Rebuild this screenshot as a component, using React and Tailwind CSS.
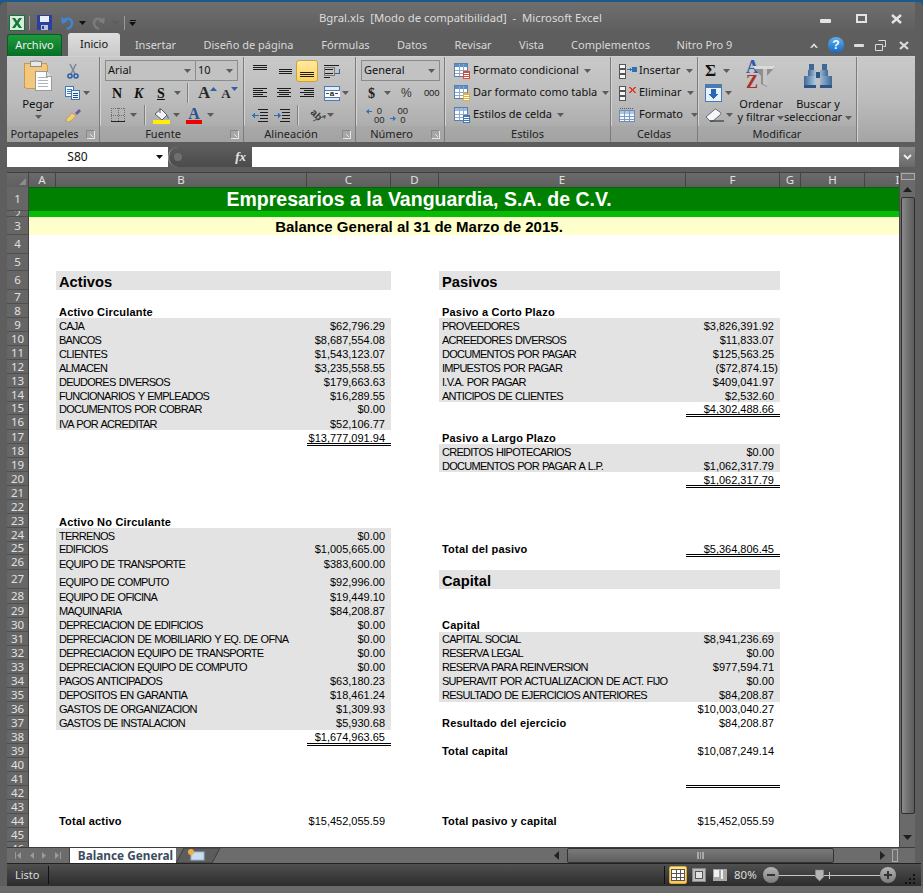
import React from 'react';

const UI = "font-['Noto_Sans',sans-serif]";
const ARIAL = "font-['Liberation_Sans',Arial,sans-serif]";
const SERIF = "font-['Liberation_Serif',serif]";

const HEIGHTS = {
  1: 'h-[24px]', 2: 'h-[6px]', 3: 'h-[18px]', 4: 'h-[19px]', 5: 'h-[17px]', 6: 'h-[19px]',
  15: 'h-[13px]', 16: 'h-[15px]', 26: 'h-[15px]', 25: 'h-[13px]', 27: 'h-[19px]', 28: 'h-[15px]',
};

const ROWS = {
  6: { l: { t: 'Activos', k: 'head' }, r: { t: 'Pasivos', k: 'head' } },
  7: {},
  8: { l: { t: 'Activo Circulante', k: 'sub' }, r: { t: 'Pasivo a Corto Plazo', k: 'sub' } },
  9: { l: { t: 'CAJA', v: '$62,796.29', k: 'band' }, r: { t: 'PROVEEDORES', v: '$3,826,391.92', k: 'band' } },
  10: { l: { t: 'BANCOS', v: '$8,687,554.08', k: 'band' }, r: { t: 'ACREEDORES DIVERSOS', v: '$11,833.07', k: 'band' } },
  11: { l: { t: 'CLIENTES', v: '$1,543,123.07', k: 'band' }, r: { t: 'DOCUMENTOS POR PAGAR', v: '$125,563.25', k: 'band' } },
  12: { l: { t: 'ALMACEN', v: '$3,235,558.55', k: 'band' }, r: { t: 'IMPUESTOS POR PAGAR', v: '($72,874.15)', k: 'band', tight: true } },
  13: { l: { t: 'DEUDORES DIVERSOS', v: '$179,663.63', k: 'band' }, r: { t: 'I.V.A. POR PAGAR', v: '$409,041.97', k: 'band' } },
  14: { l: { t: 'FUNCIONARIOS Y EMPLEADOS', v: '$16,289.55', k: 'band' }, r: { t: 'ANTICIPOS DE CLIENTES', v: '$2,532.60', k: 'band' } },
  15: { l: { t: 'DOCUMENTOS POR COBRAR', v: '$0.00', k: 'band' }, r: { v: '$4,302,488.66', dbl: true } },
  16: { l: { t: 'IVA POR ACREDITAR', v: '$52,106.77', k: 'band' } },
  17: { l: { v: '$13,777,091.94', dbl: true }, r: { t: 'Pasivo a Largo Plazo', k: 'sub' } },
  18: { r: { t: 'CREDITOS HIPOTECARIOS', v: '$0.00', k: 'band' } },
  19: { r: { t: 'DOCUMENTOS POR PAGAR A L.P.', v: '$1,062,317.79', k: 'band' } },
  20: { r: { v: '$1,062,317.79', dbl: true } },
  23: { l: { t: 'Activo No Circulante', k: 'sub' } },
  24: { l: { t: 'TERRENOS', v: '$0.00', k: 'band' } },
  25: { l: { t: 'EDIFICIOS', v: '$1,005,665.00', k: 'band' }, r: { t: 'Total del pasivo', v: '$5,364,806.45', k: 'sub', dbl: true } },
  26: { l: { t: 'EQUIPO DE TRANSPORTE', v: '$383,600.00', k: 'band' } },
  27: { l: { t: 'EQUIPO DE COMPUTO', v: '$92,996.00', k: 'band' }, r: { t: 'Capital', k: 'head' } },
  28: { l: { t: 'EQUIPO DE OFICINA', v: '$19,449.10', k: 'band' } },
  29: { l: { t: 'MAQUINARIA', v: '$84,208.87', k: 'band' } },
  30: { l: { t: 'DEPRECIACION DE EDIFICIOS', v: '$0.00', k: 'band' }, r: { t: 'Capital', k: 'sub' } },
  31: { l: { t: 'DEPRECIACION DE MOBILIARIO Y EQ. DE OFNA', v: '$0.00', k: 'band' }, r: { t: 'CAPITAL SOCIAL', v: '$8,941,236.69', k: 'band' } },
  32: { l: { t: 'DEPRECIACION EQUIPO DE TRANSPORTE', v: '$0.00', k: 'band' }, r: { t: 'RESERVA LEGAL', v: '$0.00', k: 'band' } },
  33: { l: { t: 'DEPRECIACION EQUIPO DE COMPUTO', v: '$0.00', k: 'band' }, r: { t: 'RESERVA PARA REINVERSION', v: '$977,594.71', k: 'band' } },
  34: { l: { t: 'PAGOS ANTICIPADOS', v: '$63,180.23', k: 'band' }, r: { t: 'SUPERAVIT POR ACTUALIZACION DE ACT. FIJO', v: '$0.00', k: 'band' } },
  35: { l: { t: 'DEPOSITOS EN GARANTIA', v: '$18,461.24', k: 'band' }, r: { t: 'RESULTADO DE EJERCICIOS ANTERIORES', v: '$84,208.87', k: 'band' } },
  36: { l: { t: 'GASTOS DE ORGANIZACION', v: '$1,309.93', k: 'band' }, r: { v: '$10,003,040.27' } },
  37: { l: { t: 'GASTOS DE INSTALACION', v: '$5,930.68', k: 'band' }, r: { t: 'Resultado del ejercicio', v: '$84,208.87', k: 'sub' } },
  38: { l: { v: '$1,674,963.65', dbl: true } },
  39: { r: { t: 'Total capital', v: '$10,087,249.14', k: 'sub' } },
  41: { r: { dbl: true } },
  44: { l: { t: 'Total activo', v: '$15,452,055.59', k: 'sub' }, r: { t: 'Total pasivo y capital', v: '$15,452,055.59', k: 'sub' } },
};

const COLUMNS = [
  ['A', 'w-[27px]'], ['B', 'w-[251px]'], ['C', 'w-[84px]'], ['D', 'w-[48px]'], ['E', 'w-[247px]'],
  ['F', 'w-[94px]'], ['G', 'w-[21px]'], ['H', 'w-[64px]'], ['I', 'w-[66px]'],
];

function Drop({ className = '' }) {
  return (
    <svg width="7" height="4" viewBox="0 0 7 4" className={`shrink-0 ${className}`}>
      <path d="M0 0h7L3.5 4z" fill="#5c5c5c" />
    </svg>
  );
}

function Sep() {
  return <div className="w-[2px] h-[20px] bg-[#808080] border-r border-[#d4d4d4] shrink-0" />;
}

function Lines({ rows }) {
  return (
    <svg width="16" height="14" viewBox="0 0 16 14" shapeRendering="crispEdges" className="shrink-0">
      {rows.map(([a, b, y], i) => <rect key={i} x={a} y={y} width={b - a} height="1" fill="#1c1c1c" />)}
    </svg>
  );
}

function Launcher() {
  return (
    <div className="w-[17px] flex items-center justify-center">
      <svg width="9" height="9" viewBox="0 0 9 9" shapeRendering="crispEdges">
        <path d="M0 0h8v1H1v7H0z" fill="#8a8a8a" />
        <path d="M8 1h1v8H1V8h7zM4 4h1v1H4zM5 5h1v1H5zM6 6h1v1H6z" fill="#e6e6e6" />
      </svg>
    </div>
  );
}

function Group({ w, label, launcher, children }) {
  return (
    <div className={`${w} shrink-0 flex flex-col border-r border-[#7c7c7c] shadow-[1px_0_0_#d2d2d2]`}>
      <div className="h-[66px] mt-[3px] flex">{children}</div>
      <div className="h-[17px] flex items-center bg-gradient-to-b from-[#a9a9a9] to-[#a2a2a2]">
        <div className="flex-1 text-center text-[11px] leading-none text-[#222] pb-[2px]">{label}</div>
        {launcher && <Launcher />}
      </div>
    </div>
  );
}

function Row22({ children, className = '' }) {
  return <div className={`h-[22px] flex items-center whitespace-nowrap ${className}`}>{children}</div>;
}

function Combo({ w, label, className = '' }) {
  return (
    <div className={`${w} h-[21px] border border-[#8b8b8b] bg-[#c2c2c2] flex items-center justify-between pl-[2px] pr-[4px] text-[11px] text-[#111] ${className}`}>
      <span>{label}</span>
      <Drop />
    </div>
  );
}

function ExcelLogo() {
  return (
    <svg width="16" height="16" viewBox="0 0 16 16">
      <rect width="16" height="16" rx="1" fill="#0f7a35" />
      <rect x="1" y="1" width="14" height="14" fill="#d9ecd9" />
      <path d="M3 3h3l2 3 2-3h3L9.5 8 13 13h-3L8 10l-2 3H3l3.5-5z" fill="#0f7a35" />
    </svg>
  );
}

function SaveIcon() {
  return (
    <svg width="15" height="15" viewBox="0 0 15 15" shapeRendering="crispEdges">
      <rect width="15" height="15" fill="#2b3f9e" />
      <rect x="3" y="1" width="9" height="6" fill="#e8edf6" />
      <rect x="4" y="10" width="7" height="5" fill="#b9c3dc" />
      <rect x="5" y="11" width="2" height="3" fill="#2b3f9e" />
    </svg>
  );
}

function UndoIcon({ color, flip }) {
  return (
    <svg width="14" height="14" viewBox="0 0 14 14" className={flip ? '-scale-x-100' : ''}>
      <path d="M4 4c3-2.5 8-1.5 8 3 0 3-2 5-5 6" fill="none" stroke={color} strokeWidth="2.4" />
      <path d="M1 1l1 7 6-3z" fill={color} />
    </svg>
  );
}

function ClipboardIcon() {
  return (
    <svg width="28" height="31" viewBox="0 0 28 31" shapeRendering="crispEdges">
      <rect x="0" y="3" width="23" height="25" rx="2" fill="#f3c77c" stroke="#c99a4e" />
      <rect x="6" y="1" width="11" height="5" fill="#e9e9e9" stroke="#8d8d8d" />
      <rect x="9" y="0" width="5" height="2" fill="#a9a9a9" />
      <path d="M11 11h11l5 5v14H11z" fill="#fdfdfd" stroke="#9a9a9a" />
      <path d="M14 17h10M14 20h10M14 23h10M14 26h10" stroke="#a8b4c4" />
      <path d="M22 11v5h5" fill="#dcdcdc" stroke="#9a9a9a" />
    </svg>
  );
}

function ScissorsIcon() {
  return (
    <svg width="12" height="16" viewBox="0 0 12 16">
      <path d="M3 1l5 10M9 1L4 11" stroke="#7c8795" strokeWidth="1.6" />
      <circle cx="3" cy="13" r="2" fill="none" stroke="#2b5fa8" strokeWidth="1.6" />
      <circle cx="9" cy="13" r="2" fill="none" stroke="#2b5fa8" strokeWidth="1.6" />
    </svg>
  );
}

function CopyIcon() {
  return (
    <svg width="15" height="14" viewBox="0 0 15 14" shapeRendering="crispEdges">
      <rect x=".5" y=".5" width="8" height="10" fill="#f8fbff" stroke="#3f79b5" />
      <path d="M2 3h5M2 5h5M2 7h4" stroke="#3f79b5" />
      <rect x="6.5" y="4.5" width="8" height="9" fill="#eef5fd" stroke="#3f79b5" />
      <path d="M8 7h5M8 9h5M8 11h5" stroke="#274f85" />
    </svg>
  );
}

function BrushIcon() {
  return (
    <svg width="17" height="14" viewBox="0 0 17 14">
      <path d="M1 11c2-1 3-3 6-6l4 3c-3 3-5 5-7 6-2 0-3-1-3-3z" fill="#f1cf72" stroke="#a88a3a" strokeWidth=".6" />
      <path d="M10 5l4-4 2 2-4 4z" fill="#6a5a9c" />
    </svg>
  );
}

function BorderIcon() {
  return (
    <svg width="14" height="14" viewBox="0 0 14 14" shapeRendering="crispEdges">
      <path d="M0 .5h14M0 7h14M.5 0v13M7 0v13M13.5 0v13" stroke="#6f6f6f" strokeDasharray="1 1" fill="none" />
      <rect x="0" y="13" width="14" height="1" fill="#202020" />
    </svg>
  );
}

function BucketIcon() {
  return (
    <svg width="17" height="17" viewBox="0 0 17 17">
      <path d="M2 7l6-5 6 6-5 5z" fill="#f4f4f4" stroke="#55606e" />
      <path d="M7 1v5" stroke="#55606e" />
      <path d="M14 8c1.5 1 2 3 1.5 4-1-.5-1.5-2-1.5-4z" fill="#3e6fb0" />
      <rect x="0" y="13" width="17" height="4" fill="#ffee00" />
    </svg>
  );
}

function WrapIcon() {
  return (
    <svg width="16" height="14" viewBox="0 0 16 14" shapeRendering="crispEdges">
      <path d="M0 1h15M0 5h9M0 9h9M0 13h6" stroke="#1c1c1c" />
      <rect x="0" y="3" width="10" height="8" fill="none" stroke="#7a7a7a" />
      <path d="M15 5v4h-4" fill="none" stroke="#2d62a8" />
    </svg>
  );
}

function MergeIcon() {
  return (
    <svg width="16" height="15" viewBox="0 0 16 15" shapeRendering="crispEdges">
      <rect x=".5" y=".5" width="15" height="14" fill="#e4edf7" stroke="#5479a8" />
      <rect x="0" y="4" width="16" height="7" fill="#fff" stroke="#5479a8" />
      <path d="M2 7h3M11 7h3" stroke="#264f88" />
      <text x="8" y="10" fontSize="8" textAnchor="middle" fontFamily="Liberation Sans" fontWeight="700" fill="#222">a</text>
    </svg>
  );
}

function IndentIcon({ flip }) {
  return (
    <svg width="16" height="13" viewBox="0 0 16 13" shapeRendering="crispEdges">
      <path d="M6 .5h10M8 3.5h8M8 6.5h8M8 9.5h8M6 12.5h10" stroke="#1c1c1c" />
      <path d={flip ? 'M0 6h4V4l3 2.5L4 9V7H0z' : 'M7 6H3V4L0 6.5 3 9V7h4z'} fill="#2d6fb8" />
    </svg>
  );
}

function OrientIcon() {
  return (
    <svg width="18" height="17" viewBox="0 0 18 17">
      <text x="1" y="6" fontSize="10" fontWeight="700" fontFamily="Liberation Sans" fill="#333" transform="rotate(45 1 6)">ab</text>
      <path d="M4 14L16 9" stroke="#555" />
      <path d="M17 8l-1 4-3-3z" fill="#555" />
    </svg>
  );
}

function ArrowRight() {
  return <svg width="6" height="5" viewBox="0 0 6 5"><path d="M0 2h3V0l3 2.5L3 5V3H0z" fill="#2d6fb8" /></svg>;
}

function ArrowLeft() {
  return <svg width="6" height="5" viewBox="0 0 6 5"><path d="M6 2H3V0L0 2.5 3 5V3h3z" fill="#2d6fb8" /></svg>;
}

function DecimalIcon({ flip }) {
  return (
    <div className="flex items-center gap-[2px]">
      {!flip && <div className="-mt-[7px]"><ArrowLeft /></div>}
      {flip && <div className="mt-[7px]"><ArrowRight /></div>}
      <div className={`${ARIAL} text-[9.5px] leading-[9px] text-[#2a2a2a] flex flex-col items-center`}>
        <span>{flip ? '00' : '0'}</span>
        <span>{flip ? '0' : '00'}</span>
      </div>
    </div>
  );
}

function TableIcon({ accent, head = '#5d8fca' }) {
  return (
    <svg width="16" height="16" viewBox="0 0 16 16" shapeRendering="crispEdges">
      <rect x=".5" y=".5" width="13" height="13" fill="#fdfdfd" stroke="#5a7fae" />
      <rect x="1" y="1" width="12" height="3" fill={head} />
      <path d="M5 1v12M9 1v12M1 7h12M1 10h12" stroke="#8fa9c8" />
      <rect x="9" y="8" width="7" height="8" fill={accent} />
      <path d="M10 10h5M10 12h5M10 14h5" stroke="#fff" />
    </svg>
  );
}

function CellsIcon({ kind }) {
  if (kind === 'format') {
    return (
      <svg width="16" height="16" viewBox="0 0 16 16" shapeRendering="crispEdges">
        <path d="M1 1.5h14" stroke="#555" strokeDasharray="1 1" />
        <rect x=".5" y="3.5" width="15" height="11" fill="#f3f7fc" stroke="#6d8db5" />
        <rect x="1" y="4" width="14" height="3" fill="#a9c5e8" />
        <path d="M5 4v10M10 4v10M1 9h14M1 12h14" stroke="#7c9bc2" />
      </svg>
    );
  }
  return (
    <svg width="18" height="15" viewBox="0 0 18 15" shapeRendering="crispEdges">
      <path d="M.5.5h6v4h-6zM.5 5.5h6v4h-6zM.5 10.5h6v4h-6z" fill="#f7f7f7" stroke="#555" />
      {kind === 'insert' && <path d="M8 5h3V3l2 2.5L11 8V6H8z M13 3h5v5h-5z" fill="#2f6fb5" />}
      {kind === 'delete' && <path d="M9 1l2 0 2 2 2-2h2l-3 3 3 3h-2l-2-2-2 2H9l3-3z" fill="#e23a2a" />}
    </svg>
  );
}

function FillIcon() {
  return (
    <svg width="17" height="18" viewBox="0 0 17 18" shapeRendering="crispEdges">
      <rect x=".5" y=".5" width="16" height="17" fill="#e8f0fa" stroke="#4d79b3" />
      <rect x="1" y="1" width="15" height="3" fill="#4d79b3" />
      <path d="M6 5h5v5h3l-5.5 5L3 10h3z" fill="#2a66b8" />
    </svg>
  );
}

function EraserIcon() {
  return (
    <svg width="19" height="15" viewBox="0 0 19 15">
      <path d="M1 9l8-7c1-1 2-1 3 0l3 2c1 1 1 2 0 3l-7 6H5z" fill="#f6f6f6" stroke="#5b6c80" />
      <path d="M5 13h14" stroke="#202020" />
    </svg>
  );
}

function SortIcon() {
  return (
    <div className="flex h-[32px] items-start">
      <div className={`${SERIF} font-bold flex flex-col text-[18px] leading-[15px]`}>
        <span className="text-[#2c5fa8]">A</span>
        <span className="text-[#a8322a]">Z</span>
      </div>
      <svg width="24" height="21" viewBox="0 0 24 21" className="-ml-[7px] mt-[6px]">
        <path d="M0 0h24L15 10v11l-6-3V10z" fill="#8f8f8f" />
        <path d="M0 0h24l-3 3H3z" fill="#dadada" />
        <path d="M11 3h4v17l-4-2z" fill="#c6c6c6" />
      </svg>
    </div>
  );
}

function BinocularsIcon() {
  return (
    <svg width="28" height="24" viewBox="0 0 28 24" shapeRendering="crispEdges">
      <defs>
        <linearGradient id="tube" x1="0" x2="1" y1="0" y2="0">
          <stop offset="0" stopColor="#3f6896" />
          <stop offset=".45" stopColor="#b9d0e6" />
          <stop offset="1" stopColor="#3f6896" />
        </linearGradient>
      </defs>
      <path d="M5 0h5v6H5zM18 0h5v6h-5z" fill="#3f6896" />
      <path d="M4 6h8v6H4zM16 6h8v6h-8z" fill="url(#tube)" />
      <path d="M12 8h4v6h-4z" fill="#2f5585" />
      <path d="M0 12h12v12H0zM16 12h12v12H16z" fill="url(#tube)" />
      <path d="M0 21h12v3H0zM16 21h12v3H16z" fill="#2f5585" />
    </svg>
  );
}

function Ribbon() {
  return (
    <div className={`${UI} h-[86px] flex bg-gradient-to-b from-[#c9c9c9] via-[#bcbcbc] to-[#a4a4a4] border-t border-[#d0d0d0]`}>
      <Group w="w-[93px]" label="Portapapeles" launcher>
        <div className="w-[58px] flex flex-col items-center pl-[4px]">
          <ClipboardIcon />
          <div className="text-[11.5px] leading-none mt-[7px] text-[#111]">Pegar</div>
          <Drop className="mt-[5px]" />
        </div>
        <div className="flex flex-col">
          <Row22 className="pl-[2px]"><ScissorsIcon /></Row22>
          <Row22 className="gap-[3px]"><CopyIcon /><Drop /></Row22>
          <Row22><BrushIcon /></Row22>
        </div>
      </Group>

      <Group w="w-[144px]" label="Fuente" launcher>
        <div className="flex flex-col pl-[5px]">
          <div className="h-[22px] flex">
            <Combo w="w-[91px]" label="Arial" />
            <Combo w="w-[43px]" label="10" className="-ml-px" />
          </div>
          <Row22 className={`${SERIF} font-bold text-[14px] text-[#111] pl-[7px]`}>
            <span className="w-[22px]">N</span>
            <span className="w-[23px] italic">K</span>
            <span className="w-[17px] underline">S</span>
            <Drop className="mr-[6px]" />
            <Sep />
            <span className="ml-[9px] text-[17px] text-[#2a2a2a]">A</span>
            <svg width="7" height="4" viewBox="0 0 7 4" className="mb-[9px]"><path d="M3.5 0L7 4H0z" fill="#2d62a8" /></svg>
            <span className="ml-[4px] text-[13px] mt-[2px] text-[#2a2a2a]">A</span>
            <svg width="7" height="4" viewBox="0 0 7 4" className="mb-[9px]"><path d="M0 0h7L3.5 4z" fill="#2d62a8" /></svg>
          </Row22>
          <Row22 className="pl-[6px]">
            <BorderIcon />
            <Drop className="ml-[5px] mr-[7px]" />
            <Sep />
            <div className="ml-[7px]"><BucketIcon /></div>
            <Drop className="ml-[3px] mr-[6px]" />
            <div className={`${SERIF} font-bold flex flex-col items-center w-[16px] text-[#2d4f92] text-[16px] leading-[13px]`}>
              <span>A</span>
              <span className="h-[4px] w-[16px] bg-[#ee0000]" />
            </div>
            <Drop className="ml-[5px]" />
          </Row22>
        </div>
      </Group>

      <Group w="w-[112px]" label="Alineación" launcher>
        <div className="flex flex-col pl-[8px]">
          <div className="h-[22px] flex items-center">
            <div className="w-[24px]"><Lines rows={[[1, 15, 1], [1, 15, 3], [1, 15, 5]]} /></div>
            <div className="w-[20px]"><Lines rows={[[3, 17, 5], [3, 17, 7], [3, 17, 9]]} /></div>
            <div className="w-[22px] h-[22px] flex items-center justify-center rounded-[3px] border border-[#c9a33c] bg-gradient-to-b from-[#ffe9a0] to-[#ffd35c]">
              <Lines rows={[[1, 15, 8], [1, 15, 10], [1, 15, 12]]} />
            </div>
            <div className="ml-[6px]"><WrapIcon /></div>
          </div>
          <Row22>
            <div className="w-[24px]"><Lines rows={[[1, 15, 2], [1, 11, 4], [1, 15, 6], [1, 11, 8], [1, 15, 10]]} /></div>
            <div className="w-[23px]"><Lines rows={[[1, 15, 2], [3, 13, 4], [1, 15, 6], [3, 13, 8], [1, 15, 10]]} /></div>
            <div className="w-[25px]"><Lines rows={[[1, 15, 2], [5, 15, 4], [1, 15, 6], [5, 15, 8], [1, 15, 10]]} /></div>
            <MergeIcon />
            <Drop className="ml-[2px]" />
          </Row22>
          <Row22>
            <div className="w-[22px]"><IndentIcon /></div>
            <div className="w-[23px]"><IndentIcon flip /></div>
            <Sep />
            <div className="ml-[10px]"><OrientIcon /></div>
            <Drop />
          </Row22>
        </div>
      </Group>

      <Group w="w-[89px]" label="Número" launcher>
        <div className="flex flex-col pl-[5px]">
          <div className="h-[22px]"><Combo w="w-[79px]" label="General" /></div>
          <Row22 className="text-[#222] pl-[7px]">
            <span className={`${SERIF} font-bold text-[14px] w-[13px]`}>$</span>
            <Drop className="ml-[3px] mr-[10px]" />
            <span className={`${ARIAL} text-[12px] w-[23px] text-[#333]`}>%</span>
            <span className={`${ARIAL} text-[9.5px] tracking-[-0.2px] text-[#222]`}>000</span>
          </Row22>
          <Row22 className="pl-[5px] gap-[5px]">
            <DecimalIcon />
            <DecimalIcon flip />
          </Row22>
        </div>
      </Group>

      <Group w="w-[166px]" label="Estilos">
        <div className="flex flex-col pl-[9px] text-[11px] text-[#111]">
          <Row22 className="gap-[3px]"><TableIcon accent="#d24d3a" /><span className="pb-[2px]">Formato condicional</span><Drop className="ml-[2px]" /></Row22>
          <Row22 className="gap-[3px]"><TableIcon accent="#e2b13c" /><span className="pb-[2px]">Dar formato como tabla</span><Drop className="ml-[2px]" /></Row22>
          <Row22 className="gap-[3px]"><TableIcon accent="#3f79b5" head="#9dbbe0" /><span className="pb-[2px]">Estilos de celda</span><Drop className="ml-[2px]" /></Row22>
        </div>
      </Group>

      <Group w="w-[87px]" label="Celdas">
        <div className="flex flex-col pl-[8px] text-[11px] text-[#111]">
          <Row22 className="gap-[2px]"><CellsIcon kind="insert" /><span className="pb-[2px]">Insertar</span><Drop className="ml-[4px]" /></Row22>
          <Row22 className="gap-[2px]"><CellsIcon kind="delete" /><span className="pb-[2px]">Eliminar</span><Drop className="ml-[4px]" /></Row22>
          <Row22 className="gap-[4px]"><CellsIcon kind="format" /><span className="pb-[2px]">Formato</span><Drop className="ml-[4px]" /></Row22>
        </div>
      </Group>

      <Group w="w-[159px]" label="Modificar">
        <div className="w-[40px] flex flex-col pl-[7px]">
          <Row22 className="gap-[7px]"><span className={`${SERIF} font-bold text-[17px] text-[#111] w-[11px]`}>Σ</span><Drop /></Row22>
          <Row22 className="gap-[3px]"><FillIcon /><Drop /></Row22>
          <Row22 className="gap-[2px]"><EraserIcon /><Drop /></Row22>
        </div>
        <div className="w-[46px] flex flex-col items-center text-[11px] leading-[13px] text-[#111]">
          <SortIcon />
          <div className="mt-[5px]">Ordenar</div>
          <div className="whitespace-nowrap">y filtrar <Drop className="inline-block align-middle" /></div>
        </div>
        <div className="w-[68px] flex flex-col items-center text-[11px] leading-[13px] text-[#111]">
          <div className="h-[32px] flex items-center"><BinocularsIcon /></div>
          <div className="mt-[5px]">Buscar y</div>
          <div className="whitespace-nowrap">seleccionar <Drop className="inline-block align-middle" /></div>
        </div>
      </Group>
      <div className="flex-1" />
    </div>
  );
}

function TitleBar() {
  return (
    <div className={`${UI} h-[31px] flex items-center bg-gradient-to-b from-[#6f6f6f] to-[#5e5e5e]`}>
      <div className="w-[312px] flex items-center pl-[2px] pt-[10px] shrink-0">
        <ExcelLogo />
        <div className="w-px h-[14px] bg-[#9a9a9a] ml-[4px] mr-[7px]" />
        <SaveIcon />
        <div className="ml-[8px]"><UndoIcon color="#3f86d6" /></div>
        <Drop className="ml-[5px] [&_path]:fill-[#111]" />
        <div className="ml-[6px] opacity-60"><UndoIcon color="#8d8d8d" flip /></div>
        <Drop className="ml-[6px]" />
        <div className="w-px h-[14px] bg-[#9a9a9a] ml-[5px] mr-[4px]" />
        <div className="flex flex-col items-center gap-[1px]">
          <div className="w-[6px] h-px bg-[#111]" />
          <Drop className="[&_path]:fill-[#111]" />
        </div>
      </div>
      <div className="text-[11.3px] text-[#dcdcdc] whitespace-pre pt-[1px]">Bgral.xls  [Modo de compatibilidad]  -  Microsoft Excel</div>
      <div className="flex-1" />
      <div className="flex items-center pr-[13px]">
        <svg width="11" height="4" viewBox="0 0 11 4" className="mt-[6px] mr-[25px]"><rect width="11" height="4" rx="1" fill="#e4e4e4" /></svg>
        <svg width="11" height="9" viewBox="0 0 11 9" className="mt-[2px] mr-[24px]"><rect x="1" y="1" width="9" height="7" fill="none" stroke="#e4e4e4" strokeWidth="2" /></svg>
        <svg width="11" height="10" viewBox="0 0 11 10" className="mt-[2px]"><path d="M1 1l9 8M10 1L1 9" stroke="#e4e4e4" strokeWidth="2.4" /></svg>
      </div>
    </div>
  );
}

const TABS = [
  ['Insertar', 'w-[67px]'], ['Diseño de página', 'w-[119px]'], ['Fórmulas', 'w-[75px]'], ['Datos', 'w-[58px]'],
  ['Revisar', 'w-[64px]'], ['Vista', 'w-[53px]'], ['Complementos', 'w-[105px]'], ['Nitro Pro 9', 'w-[83px]'],
];

function TabsRow() {
  return (
    <div className={`${UI} h-[23px] flex items-end bg-[#5e5e5e] text-[11px]`}>
      <div className="w-[55px] h-[22px] rounded-t-[3px] bg-gradient-to-b from-[#1d9a3c] to-[#066f26] border border-[#0a5a22] border-b-0 flex items-center justify-center text-[#f0f0f0]">Archivo</div>
      <div className="w-[52px] h-[23px] ml-[6px] mr-[2px] rounded-t-[3px] bg-gradient-to-b from-[#dedede] to-[#c9c9c9] flex items-center justify-center text-[#111]">Inicio</div>
      {TABS.map(([name, w]) => (
        <div key={name} className={`${w} h-[22px] flex items-center justify-center text-[#d8d8d8] whitespace-nowrap`}>{name}</div>
      ))}
      <div className="flex-1 h-[22px] flex items-center justify-end pr-[6px]">
        <svg width="8" height="5" viewBox="0 0 9 5" className="mr-[10px]"><path d="M0 5l4.5-5L9 5H6.5L4.5 2.5 2.5 5z" fill="#e4e4e4" /></svg>
        <div className={`${ARIAL} w-[16px] h-[16px] rounded-full bg-gradient-to-b from-[#59b1f0] to-[#1668c4] flex items-center justify-center text-white font-bold text-[12px] mr-[10px]`}>?</div>
        <svg width="10" height="3" viewBox="0 0 10 3" className="mr-[11px]"><rect width="10" height="3" rx="1" fill="#dcdcdc" /></svg>
        <svg width="11" height="11" viewBox="0 0 11 11" className="mr-[13px]"><path d="M3.5.5h7v6h-2M.5 4.5h7v6h-7z" fill="none" stroke="#dcdcdc" /></svg>
        <svg width="10" height="9" viewBox="0 0 10 9"><path d="M1 1l8 7M9 1L1 8" stroke="#dcdcdc" strokeWidth="2.2" /></svg>
      </div>
    </div>
  );
}

function FormulaBar() {
  return (
    <div className="h-[30px] pt-[5px] pb-[5px] bg-[#5d5d5d] flex">
      <div className="w-[161px] bg-white flex items-center">
        <span className={`${UI} flex-1 text-center text-[12px] text-[#111] pr-[8px]`}>S80</span>
        <Drop className="mr-[5px] [&_path]:fill-[#111]" />
      </div>
      <div className="w-[84px] rounded-l-[10px] bg-gradient-to-b from-[#5c5c5c] to-[#4b4b4b] flex items-center justify-between pl-[5px] pr-[6px] border-l border-[#9a9a9a]">
        <div className="w-[8px] h-[8px] rounded-full bg-[#6f6f6f]" />
        <span className={`${SERIF} italic text-[13px] text-[#e6e6e6] font-bold`}>fx</span>
      </div>
      <div className="flex-1 bg-white" />
      <div className="w-[16px] bg-gradient-to-b from-[#8a8a8a] to-[#696969] flex items-center justify-center">
        <svg width="9" height="6" viewBox="0 0 9 6"><path d="M1 1l3.5 3.5L8 1" fill="none" stroke="#f0f0f0" strokeWidth="1.8" /></svg>
      </div>
    </div>
  );
}

function ColumnHeaders() {
  return (
    <div className={`${UI} h-[15px] flex text-[11.5px] text-[#e0e0e0] bg-gradient-to-b from-[#6a6a6a] to-[#5f5f5f] border-t border-[#3f3f3f] overflow-hidden`}>
      <div className="w-[22px] shrink-0 border-r border-[#444] flex items-end justify-end p-[2px]">
        <svg width="7" height="7" viewBox="0 0 7 7"><path d="M7 0v7H0z" fill="#8c8c8c" /></svg>
      </div>
      {COLUMNS.map(([name, w]) => (
        <div key={name} className={`${w} shrink-0 border-r border-[#444] flex items-center justify-center leading-none`}>{name}</div>
      ))}
    </div>
  );
}

// rows above 27 sit one pixel lower inside their cell than the later ones
function Pair({ cell, bWidth, cWidth, low }) {
  const c = cell || {};
  const band = c.k === 'band' || c.k === 'head';
  const leading = low ? 'leading-[11px]' : 'leading-[13px]';
  let text = `text-[11px] ${leading} tracking-[-0.72px] [word-spacing:0.8px]`;
  if (c.k === 'head') text = 'text-[14.7px] leading-[15px] font-bold';
  if (c.k === 'sub') text = `text-[11px] ${leading} font-bold tracking-[0.2px]`;
  return (
    <div className={`flex h-full ${band ? 'bg-[#e3e3e3]' : ''}`}>
      <div className={`${bWidth} pl-[3px] flex items-end whitespace-nowrap ${text}`}>{c.t}</div>
      <div className={`${cWidth} relative flex items-end justify-end text-[11px] ${leading} ${c.tight ? 'pr-[2px]' : 'pr-[6px]'}`}>
        {c.v}
        {c.dbl && <div className="absolute inset-x-0 -bottom-[2px] h-[3px] border-y border-black" />}
      </div>
    </div>
  );
}

function SheetRow({ n }) {
  const height = HEIGHTS[n] || 'h-[14px]';
  const row = ROWS[n] || {};
  const low = n < 27;
  let body = (
    <>
      <div className="w-[27px] shrink-0" />
      <Pair cell={row.l} bWidth="w-[251px]" cWidth="w-[84px]" low={low} />
      <div className="w-[48px] shrink-0" />
      <Pair cell={row.r} bWidth="w-[247px]" cWidth="w-[94px]" low={low} />
    </>
  );
  if (n === 1) body = <div className="flex-1 bg-[#008000] text-white font-bold text-[19.5px] flex items-center justify-center pr-[90px] border-t border-[#0a5f0a]">Empresarios a la Vanguardia, S.A. de C.V.</div>;
  if (n === 2) body = <div className="flex-1 bg-[#06bd06]" />;
  if (n === 3) body = <div className="flex-1 bg-[#ffffcc] font-bold text-[15px] flex items-center justify-center pr-[90px] pt-[2px]">Balance General al 31 de Marzo de 2015.</div>;
  return (
    <div className={`${height} flex shrink-0`}>
      <div className={`${UI} w-[22px] shrink-0 bg-[#666] border-r border-[#444] border-b border-b-[#4f4f4f] text-[11.5px] text-[#e0e0e0] flex items-center justify-center leading-none ${n === 2 ? 'overflow-hidden' : ''}`}>{n}</div>
      {body}
    </div>
  );
}

function VScroll() {
  return (
    <div className="w-[16px] shrink-0 bg-[#6a6a6a] flex flex-col items-center border-l border-[#4a4a4a]">
      <div className="w-[14px] h-[7px] mt-[1px] border border-[#aaa] bg-[#707070]" />
      <svg width="9" height="5" viewBox="0 0 9 5" className="mt-[7px]"><path d="M4.5 0L9 5H0z" fill="#1e1e1e" /></svg>
      <div className="w-[14px] h-[617px] mt-[5px] rounded-[2px] border border-[#2f2f2f] bg-gradient-to-r from-[#8a8a8a] via-[#707070] to-[#5c5c5c]" />
      <svg width="9" height="5" viewBox="0 0 9 5" className="mt-[21px]"><path d="M0 0h9L4.5 5z" fill="#1e1e1e" /></svg>
    </div>
  );
}

function SheetTabs() {
  return (
    <div className={`${UI} h-[16px] flex items-stretch bg-[#6c6c6c] border-t border-[#3c3c3c]`}>
      <div className="w-[63px] flex items-center justify-around px-[4px] border-r border-[#444]">
        <svg width="6" height="7" viewBox="0 0 6 7"><path d="M0 0h1v7H0zM6 0v7L2 3.5z" fill="#9a9a9a" /></svg>
        <svg width="4" height="7" viewBox="0 0 4 7"><path d="M4 0v7L0 3.5z" fill="#9a9a9a" /></svg>
        <svg width="4" height="7" viewBox="0 0 4 7"><path d="M0 0v7l4-3.5z" fill="#9a9a9a" /></svg>
        <svg width="6" height="7" viewBox="0 0 6 7"><path d="M5 0h1v7H5zM0 0v7l4-3.5z" fill="#9a9a9a" /></svg>
      </div>
      <div className="w-[106px] bg-white flex items-center justify-center pl-[5px] text-[11.8px] font-bold text-[#3d4c60] leading-none whitespace-nowrap">Balance General</div>
      <svg width="49" height="15" viewBox="0 0 49 15" className="shrink-0">
        <path d="M0 15L8 0h36L36 15z" fill="#5c5c5c" stroke="#3c3c3c" />
        <rect x="15" y="4" width="13" height="8" fill="#c9dcf0" stroke="#9ab4d0" />
        <circle cx="15" cy="4" r="3" fill="#f0b040" />
      </svg>
      <div className="w-[342px] flex items-center justify-end pr-[8px]">
        <svg width="5" height="9" viewBox="0 0 5 9"><path d="M5 0v9L0 4.5z" fill="#222" /></svg>
      </div>
      <div className="w-[267px] rounded-[2px] border border-[#333] bg-gradient-to-b from-[#7a7a7a] to-[#5e5e5e] flex items-center justify-center">
        <div className="w-[7px] h-[7px] border-x border-[#aaa] bg-[repeating-linear-gradient(90deg,#aaa_0_1px,transparent_1px_2px)]" />
      </div>
      <div className="flex-1 flex items-center justify-end pr-[7px]">
        <svg width="5" height="9" viewBox="0 0 5 9"><path d="M0 0v9l5-4.5z" fill="#222" /></svg>
      </div>
      <div className="w-[6px] my-[1px] mr-[17px] border border-[#aaa] bg-[#707070]" />
    </div>
  );
}

function ViewIcon({ active, children }) {
  return (
    <div className={`w-[18px] h-[18px] flex items-center justify-center shrink-0 ${active ? 'rounded-[2px] bg-gradient-to-b from-[#ffe58c] to-[#ffc94d] border border-[#d8a93a]' : ''}`}>
      {children}
    </div>
  );
}

function ZoomButton({ plus }) {
  return (
    <div className="w-[16px] h-[16px] rounded-full bg-gradient-to-b from-[#b5b5b5] to-[#7c7c7c] flex items-center justify-center shrink-0">
      <svg width="10" height="10" viewBox="0 0 10 10">
        <rect x="1" y="4" width="8" height="2" fill="#333" />
        {plus && <rect x="4" y="1" width="2" height="8" fill="#333" />}
      </svg>
    </div>
  );
}

function StatusBar() {
  return (
    <div className={`${UI} h-[23px] flex items-center bg-gradient-to-b from-[#505050] to-[#2c2c2c] border-t border-[#222] text-[11px] text-[#dcdcdc]`}>
      <span className="pl-[8px] w-[41px] shrink-0">Listo</span>
      <div className="w-px h-[18px] bg-[#111] shrink-0" />
      <div className="w-[615px] shrink-0" />
      <div className="w-px h-[18px] bg-[#111] shrink-0" />
      <div className="flex items-center gap-[3px] ml-[4px]">
        <ViewIcon active>
          <svg width="14" height="12" viewBox="0 0 14 12" shapeRendering="crispEdges">
            <rect x=".5" y=".5" width="13" height="11" fill="#fff" stroke="#555" />
            <path d="M5 1v10M9 1v10M1 4h12M1 8h12" stroke="#555" />
          </svg>
        </ViewIcon>
        <ViewIcon>
          <svg width="14" height="14" viewBox="0 0 14 14" shapeRendering="crispEdges">
            <rect x=".5" y=".5" width="13" height="13" fill="#bcbcbc" stroke="#888" />
            <rect x="3.5" y="3.5" width="7" height="7" fill="#e4e4e4" stroke="#555" />
          </svg>
        </ViewIcon>
        <ViewIcon>
          <svg width="14" height="12" viewBox="0 0 14 12" shapeRendering="crispEdges">
            <rect width="14" height="12" fill="#a8a8a8" />
            <rect x="1" y="1" width="5" height="7" fill="#f0f0f0" />
            <rect x="8" y="1" width="2" height="9" fill="#f0f0f0" />
          </svg>
        </ViewIcon>
      </div>
      <span className="ml-[5px] w-[29px] text-[11.5px] shrink-0">80%</span>
      <ZoomButton />
      <div className="w-[101px] h-px bg-[#c4c4c4] relative shrink-0">
        <svg width="9" height="13" viewBox="0 0 10 13" className="absolute left-[36px] -top-[6px]"><path d="M0 0h10v8l-5 5-5-5z" fill="#b4b4b4" stroke="#555" /></svg>
        <div className="absolute left-[50px] -top-[3px] w-px h-[7px] bg-[#c4c4c4]" />
      </div>
      <ZoomButton plus />
      <svg width="11" height="11" viewBox="0 0 11 11" className="ml-[9px] mt-[8px] shrink-0" shapeRendering="crispEdges">
        <path d="M8 0h2v2H8zM4 4h2v2H4zM8 4h2v2H8zM0 8h2v2H0zM4 8h2v2H4zM8 8h2v2H8z" fill="#111" />
      </svg>
    </div>
  );
}

export default function App() {
  const rowNumbers = Array.from({ length: 46 }, (_, i) => i + 1);
  return (
    <div className="w-[923px] h-[893px] bg-[#1c5a8c] pt-[2px] overflow-hidden">
      <div className={`${ARIAL} h-[891px] rounded-t-[5px] bg-[#5e5e5e] text-black flex flex-col`}>
        <div className="pl-[7px] pr-[8px] flex flex-col flex-1">
          <TitleBar />
          <TabsRow />
          <Ribbon />
          <FormulaBar />
          <div className="flex h-[675px]">
            <div className="w-[892px] flex flex-col shrink-0">
              <ColumnHeaders />
              <div className="h-[660px] bg-white flex flex-col overflow-hidden">
                {rowNumbers.map((n) => <SheetRow key={n} n={n} />)}
              </div>
            </div>
            <VScroll />
          </div>
          <SheetTabs />
        </div>
        <div className="pl-[7px] pr-[2px]">
          <StatusBar />
        </div>
        <div className="h-[7px] bg-[#6a6a6a]" />
      </div>
    </div>
  );
}
